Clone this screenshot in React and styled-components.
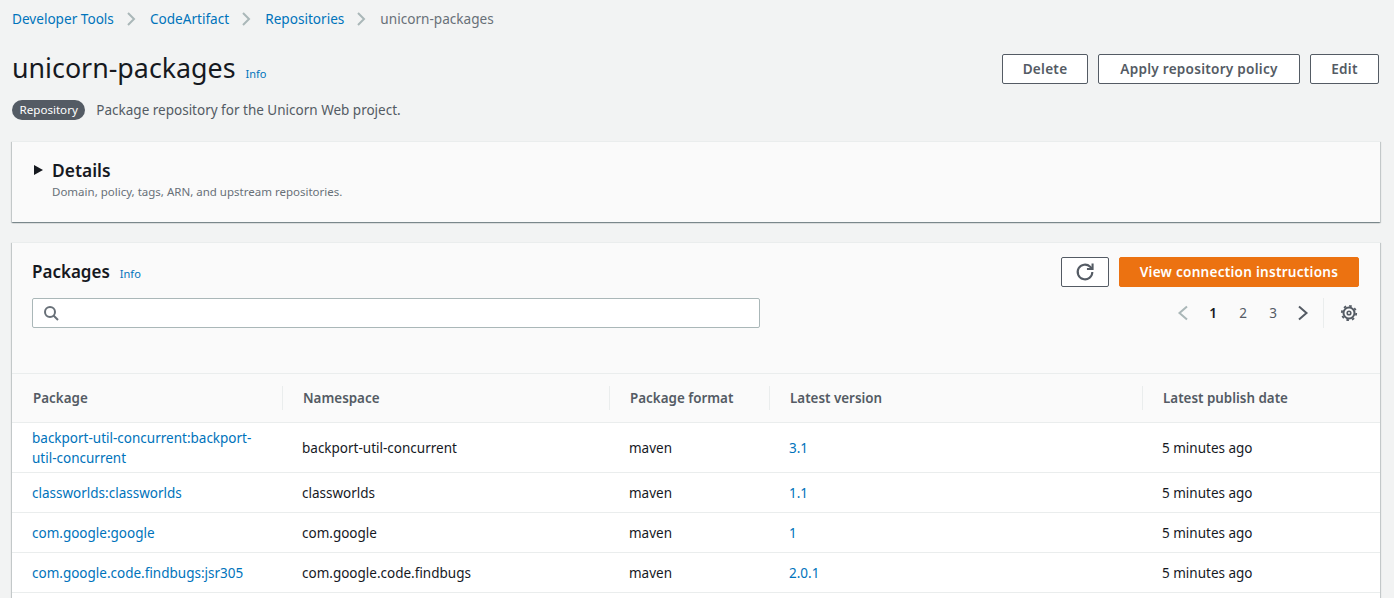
import React from 'react';
import styled, {createGlobalStyle} from 'styled-components';

const GlobalStyle = createGlobalStyle`
    html, body {
        margin: 0;
        height: 598px;
        overflow: hidden;
        background: #f2f3f3;
        font-family: "Noto Sans", "Open Sans", sans-serif;
        font-size: 13.5px;
        line-height: 20px;
        color: #16191f;
    }
`;

const Page = styled.div`
    height: 598px;
    box-sizing: border-box;
    padding: 9px 14px 0 12px;
    display: flex;
    flex-direction: column;
`;

const Breadcrumbs = styled.nav`
    display: flex;
    align-items: center;
    height: 20px;
    font-size: 13.6px;
`;

const Crumb = styled.a`
    color: #0073bb;
    white-space: nowrap;
`;

const CurrentCrumb = styled.span`
    color: #687078;
`;

const CrumbSep = styled.svg`
    width: 16px;
    height: 16px;
    margin: 0 11px 0 9px;
    fill: none;
    stroke: #aab7b8;
    stroke-width: 2;
`;

const PageHeader = styled.header`
    display: flex;
    justify-content: space-between;
    align-items: flex-start;
    margin-top: 24px;
`;

const TitleRow = styled.div`
    display: flex;
    align-items: baseline;
    height: 30px;
`;

const Title = styled.h1`
    margin: 0;
    font-size: 26.8px;
    line-height: 30px;
    font-weight: 400;
    color: #16191f;
`;

const InfoLink = styled.a`
    color: #0073bb;
    font-size: 11px;
    margin-left: 10px;
`;

const DescRow = styled.div`
    display: flex;
    align-items: center;
    margin-top: 17px;
    height: 20px;
    color: #545b64;
`;

const Badge = styled.span`
    background: #545b64;
    color: #fff;
    font-size: 11.6px;
    line-height: 20px;
    height: 20px;
    padding: 0 7.5px;
    border-radius: 10px;
    margin-right: 11px;
`;

const Actions = styled.div`
    display: flex;
    gap: 10px;
    margin: 1px 1px 0 0;
`;

const Button = styled.button`
    height: 30px;
    width: ${p => p.$width}px;
    box-sizing: border-box;
    padding: 0;
    background: #fff;
    border: 1px solid #545b64;
    border-radius: 2px;
    font-family: inherit;
    font-size: 13.6px;
    line-height: 20px;
    font-weight: 600;
    letter-spacing: 0.25px;
    color: #545b64;
    display: flex;
    align-items: center;
    justify-content: center;
    white-space: nowrap;
`;

const PrimaryButton = styled(Button)`
    background: #ec7211;
    border-color: #ec7211;
    color: #fff;
`;

const Card = styled.section`
    background: #fafafa;
    border-top: 1px solid #eaeded;
    box-shadow: 0 1px 1px 0 rgba(0, 28, 36, 0.3), 1px 1px 1px 0 rgba(0, 28, 36, 0.15), -1px 1px 1px 0 rgba(0, 28, 36, 0.15);
`;

const DetailsCard = styled(Card)`
    margin-top: 21px;
    height: 81px;
    box-sizing: border-box;
    padding: 17px 20px 0 22px;
    display: flex;
    align-items: flex-start;
`;

const Caret = styled.svg`
    width: 9px;
    height: 10px;
    margin-top: 6px;
    margin-right: 9px;
    fill: #16191f;
`;

const DetailsTitle = styled.div`
    font-size: 17.4px;
    line-height: 22px;
    font-weight: 600;
    color: #16191f;
`;

const DetailsDesc = styled.div`
    font-size: 11.5px;
    line-height: 16px;
    margin-top: 3px;
    color: #687078;
`;

const PackagesCard = styled(Card)`
    margin-top: 20px;
    flex: 1;
    display: flex;
    flex-direction: column;
    min-height: 0;
`;

const PackagesHead = styled.div`
    height: 130px;
    flex: none;
    box-sizing: border-box;
    padding: 14px 21px 0 20px;
    display: flex;
    justify-content: space-between;
`;

const HeadLeft = styled.div`
    width: 728px;
`;

const PackagesTitleRow = styled.div`
    display: flex;
    align-items: baseline;
    height: 30px;
`;

const PackagesTitle = styled.h2`
    margin: 0;
    font-size: 17px;
    line-height: 30px;
    font-weight: 600;
`;

const SearchBox = styled.div`
    margin-top: 11px;
    height: 30px;
    box-sizing: border-box;
    background: #fff;
    border: 1px solid #aab7b8;
    border-radius: 2px;
    display: flex;
    align-items: center;
    padding-left: 10px;
`;

const SearchIcon = styled.svg`
    width: 16px;
    height: 16px;
    fill: none;
    stroke: #687078;
    stroke-width: 2;
`;

const HeadRight = styled.div`
    display: flex;
    flex-direction: column;
    align-items: flex-end;
`;

const HeadActions = styled.div`
    display: flex;
    gap: 10px;
`;

const RefreshIcon = styled.svg`
    width: 22px;
    height: 22px;
    fill: none;
    stroke: #545b64;
    stroke-width: 1.7;
`;

const Pagination = styled.div`
    display: flex;
    align-items: center;
    margin-top: 11px;
    height: 30px;
`;

const PageArrow = styled.svg`
    width: 16px;
    height: 16px;
    margin: ${p => (p.$disabled ? '0 7px 0 0' : '0 0 0 7px')};
    fill: none;
    stroke: ${p => (p.$disabled ? '#aab7b8' : '#545b64')};
    stroke-width: 2;
`;

const PageNumber = styled.span`
    width: 30px;
    text-align: center;
    font-size: 13.5px;
    font-weight: ${p => (p.$active ? 600 : 400)};
    color: ${p => (p.$active ? '#16191f' : '#545b64')};
`;

const PrefsDivider = styled.div`
    width: 1px;
    height: 30px;
    background: #eaeded;
    margin: 0 16px 0 12px;
`;

const GearIcon = styled.svg`
    width: 18px;
    height: 18px;
    margin-right: 1px;
    fill: none;
    stroke: #545b64;
`;

const TableWrap = styled.div`
    flex: 1;
    background: #fff;
`;

const Table = styled.table`
    width: 100%;
    border-collapse: collapse;
    table-layout: fixed;
`;

const Th = styled.th`
    background: #fafafa;
    border-top: 1px solid #eaeded;
    border-bottom: 1px solid #eaeded;
    height: 49px;
    padding: 0 0 0 21px;
    box-sizing: border-box;
    text-align: left;
    font-size: 13.4px;
    font-weight: 600;
    color: #545b64;
    position: relative;

    &:not(:first-child)::before {
        content: '';
        position: absolute;
        left: 0;
        top: 12px;
        height: 24px;
        width: 1px;
        background: #eaeded;
    }
`;

const Tr = styled.tr`
    height: ${p => (p.$tall ? '50px' : '40px')};
`;

const Td = styled.td`
    background: #fff;
    border-bottom: 1px solid #eaeded;
    padding: 0 20px;
    box-sizing: border-box;
    font-size: 13.5px;
    line-height: 20px;
    color: #16191f;
`;

const CellLink = styled.a`
    color: #0073bb;
`;

const Chevron = (props) => (
    <svg viewBox="0 0 16 16" {...props}>
        <path d="M5 2l6 6-6 6" />
    </svg>
);

const PageChevron = ({dir, ...props}) => (
    <svg viewBox="0 0 16 16" {...props}>
        <path d={dir === 'left' ? 'M12 1.5L4.5 8l7.5 6.5' : 'M4 1.5L11.5 8 4 14.5'} />
    </svg>
);

const columns = ['Package', 'Namespace', 'Package format', 'Latest version', 'Latest publish date'];
const widths = [270, 327, 160, 373, 238];

const rows = [
    {pkg: 'backport-util-concurrent:backport-util-concurrent', ns: 'backport-util-concurrent', version: '3.1', tall: true},
    {pkg: 'classworlds:classworlds', ns: 'classworlds', version: '1.1'},
    {pkg: 'com.google:google', ns: 'com.google', version: '1'},
    {pkg: 'com.google.code.findbugs:jsr305', ns: 'com.google.code.findbugs', version: '2.0.1'},
];

const App = () => {

    return (
        <Page>
            <GlobalStyle />

            <Breadcrumbs>
                <Crumb>Developer Tools</Crumb>
                <CrumbSep as={Chevron} />
                <Crumb>CodeArtifact</Crumb>
                <CrumbSep as={Chevron} />
                <Crumb>Repositories</Crumb>
                <CrumbSep as={Chevron} />
                <CurrentCrumb>unicorn-packages</CurrentCrumb>
            </Breadcrumbs>

            <PageHeader>
                <div>
                    <TitleRow>
                        <Title>unicorn-packages</Title>
                        <InfoLink>Info</InfoLink>
                    </TitleRow>
                    <DescRow>
                        <Badge>Repository</Badge>
                        Package repository for the Unicorn Web project.
                    </DescRow>
                </div>
                <Actions>
                    <Button $width={86}>Delete</Button>
                    <Button $width={202}>Apply repository policy</Button>
                    <Button $width={69}>Edit</Button>
                </Actions>
            </PageHeader>

            <DetailsCard>
                <Caret viewBox="0 0 9 10"><path d="M0 0l9 5-9 5z" /></Caret>
                <div>
                    <DetailsTitle>Details</DetailsTitle>
                    <DetailsDesc>Domain, policy, tags, ARN, and upstream repositories.</DetailsDesc>
                </div>
            </DetailsCard>

            <PackagesCard>
                <PackagesHead>
                    <HeadLeft>
                        <PackagesTitleRow>
                            <PackagesTitle>Packages</PackagesTitle>
                            <InfoLink>Info</InfoLink>
                        </PackagesTitleRow>
                        <SearchBox>
                            <SearchIcon viewBox="0 0 16 16">
                                <circle cx="7" cy="7" r="5" />
                                <path d="M10.5 10.5L15 15" />
                            </SearchIcon>
                        </SearchBox>
                    </HeadLeft>
                    <HeadRight>
                        <HeadActions>
                            <Button $width={48}>
                                <RefreshIcon viewBox="0 0 18 18">
                                    <path d="M15 9a6 6 0 1 1-1.8-4.3L15 6.5" />
                                    <path d="M15.2 2v4.6h-4.6" />
                                </RefreshIcon>
                            </Button>
                            <PrimaryButton $width={240}>View connection instructions</PrimaryButton>
                        </HeadActions>
                        <Pagination>
                            <PageArrow as={PageChevron} dir="left" $disabled />
                            <PageNumber $active>1</PageNumber>
                            <PageNumber>2</PageNumber>
                            <PageNumber>3</PageNumber>
                            <PageArrow as={PageChevron} dir="right" />
                            <PrefsDivider />
                            <GearIcon viewBox="0 0 18 18">
                                <circle cx="9" cy="9" r="5.5" strokeWidth="2" />
                                <circle cx="9" cy="9" r="1.8" strokeWidth="1.6" />
                                <circle cx="9" cy="9" r="7.2" strokeWidth="1.8" strokeDasharray="2.6 3.05" />
                            </GearIcon>
                        </Pagination>
                    </HeadRight>
                </PackagesHead>

                <TableWrap>
                    <Table>
                        <colgroup>
                            {widths.map((w, i) => <col key={i} width={w} />)}
                        </colgroup>
                        <thead>
                            <tr>
                                {columns.map(c => <Th key={c}>{c}</Th>)}
                            </tr>
                        </thead>
                        <tbody>
                            {rows.map(r => (
                                <Tr key={r.pkg} $tall={r.tall}>
                                    <Td><CellLink>{r.pkg}</CellLink></Td>
                                    <Td>{r.ns}</Td>
                                    <Td>maven</Td>
                                    <Td><CellLink>{r.version}</CellLink></Td>
                                    <Td>5 minutes ago</Td>
                                </Tr>
                            ))}
                        </tbody>
                    </Table>
                </TableWrap>
            </PackagesCard>
        </Page>
    );
}

export default App;
